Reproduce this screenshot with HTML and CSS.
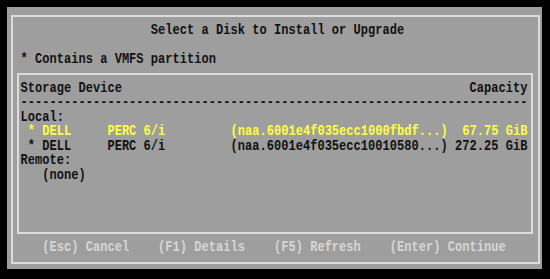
FILE: index.html
```html
<!DOCTYPE html>
<html>
<head>
<meta charset="utf-8">
<link rel="stylesheet" href="styles.css">
</head>
<body>
<div class="panel">
  <div class="frame">
    <div class="ln out"><span class="t">                  Select a Disk to Install or Upgrade</span></div>
    <div class="ln out"></div>
    <div class="ln out"><span class="t">* Contains a VMFS partition</span></div>
    <div class="box">
      <div class="ln"><span class="t">Storage Device                                                Capacity</span></div>
      <div class="ln"><span class="t">----------------------------------------------------------------------</span></div>
      <div class="ln"><span class="t">Local:</span></div>
      <div class="ln sel"><span class="t"> * DELL     PERC 6/i         (naa.6001e4f035ecc1000fbdf...)  67.75 GiB</span></div>
      <div class="ln"><span class="t"> * DELL     PERC 6/i         (naa.6001e4f035ecc10010580...) 272.25 GiB</span></div>
      <div class="ln"><span class="t">Remote:</span></div>
      <div class="ln"><span class="t">   (none)</span></div>
    </div>
    <div class="ln out keys"><span class="t">   (Esc) Cancel    (F1) Details    (F5) Refresh    (Enter) Continue</span></div>
  </div>
</div>
</body>
</html>
```

FILE: styles.css
```css
html, body {
  margin: 0;
  padding: 0;
  background: #000;
  overflow: hidden;
}
body {
  width: 550px;
  height: 279px;
  font-family: "Liberation Mono", "DejaVu Sans Mono", monospace;
  font-size: 12px;
  font-weight: bold;
  color: #111;
}
.panel {
  margin: 7px 0 0 7px;
  width: 535px;
  height: 262px;
  background: #9e9e9e;
  box-sizing: border-box;
  padding: 8px 2px 5px 4px;
}
.frame {
  height: 100%;
  box-sizing: border-box;
  border: 2px solid #dcdcdc;
  padding-top: 4.75px;
}
.ln {
  height: 14.5px;
  white-space: pre;
}
.ln.out {
  padding-left: 7.5px;
}
.t {
  display: inline-block;
  vertical-align: top;
  line-height: 14.5px;
  letter-spacing: 0.04px;
  transform: scaleY(1.25);
  transform-origin: 0 3.2px;
}
.box {
  margin: 7.75px 5px 0 4px;
  height: 161px;
  box-sizing: border-box;
  border: 2px solid #dcdcdc;
  padding: 4.75px 0 0 1.5px;
}
.sel {
  color: #ffff3c;
}
.keys {
  margin-top: 5.25px;
  color: #d6d6d6;
}
```
